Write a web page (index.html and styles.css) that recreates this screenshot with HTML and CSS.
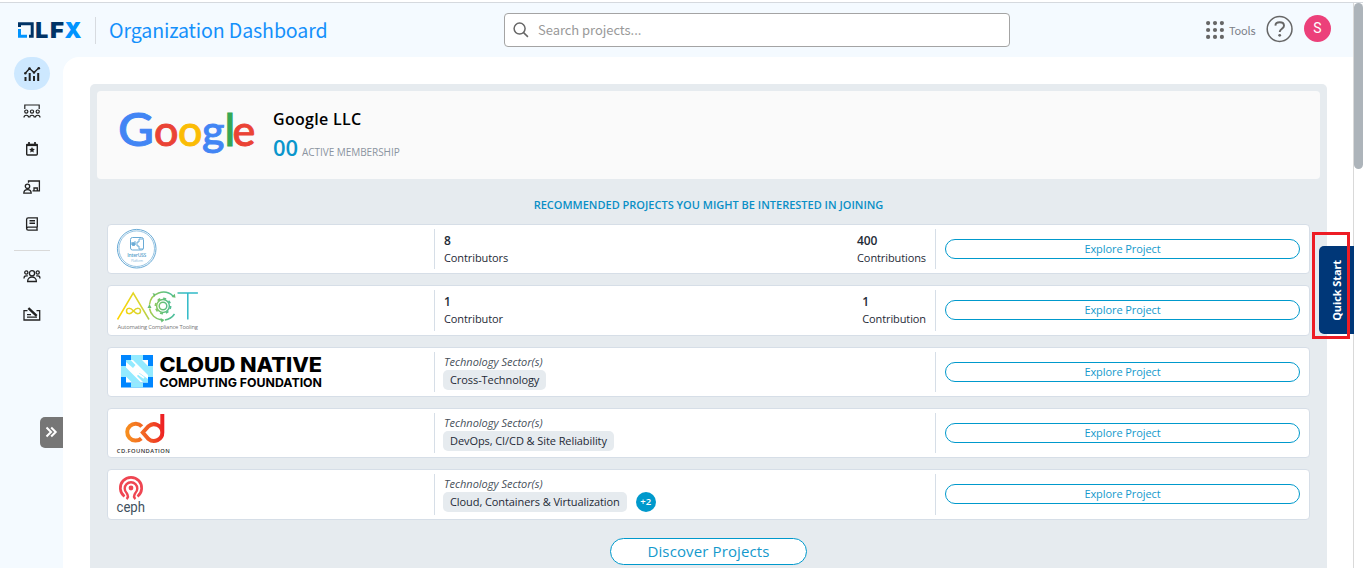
FILE: index.html
```html
<!DOCTYPE html>
<html lang="en">
<head>
<meta charset="utf-8">
<title>Organization Dashboard</title>
<link rel="stylesheet" href="styles.css">
</head>
<body>
<div class="app">
  <div class="window">
    <header class="header">
      <svg class="lfx" width="66" height="20" viewBox="0 0 66 20">
        <path d="M2.500 7V3.700H15.200V16.200H12" fill="none" stroke="#003366" stroke-width="3"/>
        <path d="M2.500 9V16.200H10" fill="none" stroke="#0094ff" stroke-width="3"/>
        <text class="lfx-text" y="17.800" font-size="22"><tspan x="18.200" textLength="13" lengthAdjust="spacingAndGlyphs" fill="#003366">L</tspan><tspan x="33" textLength="14" lengthAdjust="spacingAndGlyphs" fill="#003366">F</tspan><tspan x="47.500" textLength="17" lengthAdjust="spacingAndGlyphs" fill="#0094ff">X</tspan></text>
      </svg>
      <h1 class="title">Organization Dashboard</h1>
      <div class="search">
        <svg width="16" height="16" viewBox="0 0 16 16" fill="none" stroke="#666" stroke-width="1.5"><circle cx="6.6" cy="6.6" r="5.5"/><path d="M10.6 10.6l4.300 4.300"/></svg>
        <span>Search projects...</span>
      </div>
      <div class="tools">
        <svg width="18" height="18" viewBox="0 0 18 18" fill="#666"><circle cx="2.1" cy="2.1" r="2.1"/><circle cx="9" cy="2.1" r="2.1"/><circle cx="15.9" cy="2.1" r="2.1"/><circle cx="2.1" cy="9" r="2.1"/><circle cx="9" cy="9" r="2.1"/><circle cx="15.9" cy="9" r="2.1"/><circle cx="2.1" cy="15.9" r="2.1"/><circle cx="9" cy="15.9" r="2.1"/><circle cx="15.9" cy="15.9" r="2.1"/></svg>
        <span>Tools</span>
      </div>
      <svg class="help" width="28" height="28" viewBox="0 0 28 28" fill="none" stroke="#666"><circle cx="13.6" cy="14" r="12.4" stroke-width="1.5"/><path d="M9.4 10.6C9.5 8.4 11.2 7.3 13.7 7.3c2.6 0 4.3 1.3 4.3 3.4 0 3-4.300 3-4.300 6.400" stroke-width="1.9"/><circle cx="13.7" cy="20.3" r="1.4" fill="#666" stroke="none"/></svg>
      <div class="avatar">S</div>
    </header>
    <div class="body">
      <nav class="sidebar">
        <div class="nav-item active"><svg width="18" height="16" viewBox="0 0 18 16" fill="none" stroke="#222"><path d="M2.500 7L6.500 2.500l4.500 4 5-4.700" stroke-width="1.400"/><path d="M2.500 11v4M6.700 7V15M11 10v5M15.200 7v8" stroke-width="2"/><g fill="#222" stroke="none"><circle cx="2.300" cy="7.300" r="1.200"/><circle cx="6.500" cy="2.600" r="1.300"/><circle cx="11" cy="6.500" r="1.200"/><circle cx="15.800" cy="2.200" r="1.300"/></g></svg></div>
        <div class="nav-item"><svg width="18" height="14" viewBox="0 0 18 14" fill="none" stroke="#222" stroke-width="1.200"><path d="M1.800 5V1H16.200V5"/><circle cx="3.300" cy="7.600" r="1.600"/><circle cx="9" cy="7.600" r="1.600"/><circle cx="14.700" cy="7.600" r="1.600"/><path d="M1 13.500c0-3 4.600-3 4.600 0M6.700 13.500c0-3 4.600-3 4.600 0M12.400 13.500c0-3 4.600-3 4.600 0"/></svg></div>
        <div class="nav-item"><svg width="14" height="14" viewBox="0 0 14 14" fill="none" stroke="#222"><rect x="1.700" y="2.500" width="10.600" height="10.500" rx="1" stroke-width="1.400"/><path d="M1.200 3h11.600" stroke-width="2.200"/><path d="M4 0v3M10 0v3" stroke-width="1.700"/><path d="M7 4.900l.9 1.900 2 .2-1.500 1.400.4 2L7 9.400l-1.800 1 .4-2-1.500-1.400 2-.2z" fill="#222" stroke="none"/></svg></div>
        <div class="nav-item"><svg width="18" height="14" viewBox="0 0 18 14" fill="none" stroke="#222" stroke-width="1.300"><path d="M5.500 2.800V1H16.400V10.800H9.500M11 10.500V8h3.300v2.500"/><circle cx="4.500" cy="6.300" r="2.200"/><path d="M.8 13.200c0-4.800 7.400-4.800 7.400 0z"/></svg></div>
        <div class="nav-item"><svg width="14" height="14" viewBox="0 0 14 14" fill="none" stroke="#222" stroke-width="1.300"><path d="M12.300 10.200V.8H3.200C2.200.8 1.600 1.500 1.600 2.500v9c0 1 .6 1.700 1.600 1.700h9.600M12.200 10.200H3.200c-2 0-2 3 0 3M12 10v3"/><path d="M4.500 3.700h5.500M4.500 6.200h5.500" stroke-width="1.400"/></svg></div>
        <div class="rule"></div>
        <div class="nav-item"><svg width="18" height="14" viewBox="0 0 18 14" fill="none" stroke="#222" stroke-width="1.300"><circle cx="9" cy="4.300" r="2.600"/><path d="M4.600 12.500c-.2-6 9-6 8.800 0z"/><circle cx="3.300" cy="3.500" r="1.600"/><circle cx="14.700" cy="3.500" r="1.600"/><path d="M1 9.500c0-2.500 1.300-3 3.800-2.600M17 9.500c0-2.500-1.300-3-3.800-2.600"/></svg></div>
        <div class="nav-item"><svg width="18" height="14" viewBox="0 0 18 14" fill="none" stroke="#222" stroke-width="1.300"><path d="M4.500 3.700H1v9.300h15.700V3.700h-3.200M4 10.200h10M4 7.600h4"/><path d="M5.400 1.200l8.300 7.600" stroke-width="2.400"/></svg></div>
        <div class="toggle"><svg width="12" height="12" viewBox="0 0 12 12" fill="none" stroke="#fff" stroke-width="2"><path d="M1.500 1.500L6 6l-4.500 4.500M6.200 1.500L10.700 6l-4.500 4.500"/></svg></div>
      </nav>
      <main class="main">
        <section class="panel">
          <div class="company">
            <svg width="140" height="56" viewBox="0 0 140 56" class="google"><text y="38" font-size="43" stroke-width=".9"><tspan x="-1" font-size="46" textLength="36" lengthAdjust="spacingAndGlyphs" fill="#4285f4" stroke="#4285f4">G</tspan><tspan x="35" fill="#ea4335" stroke="#ea4335">o</tspan><tspan x="59" fill="#fbbc05" stroke="#fbbc05">o</tspan><tspan x="83" fill="#4285f4" stroke="#4285f4">g</tspan><tspan x="105.500" font-size="45" fill="#34a853" stroke="#34a853">l</tspan><tspan x="113.500" fill="#ea4335" stroke="#ea4335">e</tspan></text></svg>
            <div class="company-info">
              <h2>Google LLC</h2>
              <p><b>00</b> <span>ACTIVE MEMBERSHIP</span></p>
            </div>
          </div>
          <h3 class="recommend">RECOMMENDED PROJECTS YOU MIGHT BE INTERESTED IN JOINING</h3>
          <div class="rows">
            <article class="row">
              <div class="logo"><svg width="60" height="48" viewBox="0 0 60 48" fill="none" stroke="#6aabd6"><circle cx="28.700" cy="23.700" r="19.300" stroke-width="1"/><circle cx="28.700" cy="23.700" r="17.800" stroke-width=".7"/><rect x="22.500" y="12.500" width="13" height="12.500" rx="2" stroke-width="1"/><path d="M35 14h-4v3h-2v4h2v3h4M24 17v3h3v-4" stroke-width="1"/><circle cx="25.500" cy="19" r="1.500" fill="#6aabd6"/><text x="19.300" y="32" font-size="5" font-weight="600" textLength="19" fill="#5b9fcb" stroke="none">InterUSS</text><text x="23" y="37" font-size="3.500" textLength="12" fill="#8dbddd" stroke="none">Platform</text></svg></div>
              <div class="info split"><div><b>8</b><span>Contributors</span></div><div><b>400</b><span>Contributions</span></div></div>
              <div class="action"><button>Explore Project</button></div>
            </article>
            <article class="row">
              <div class="logo"><svg width="100" height="48" viewBox="0 0 100 48" fill="none"><defs><linearGradient id="act" gradientUnits="userSpaceOnUse" x1="10" y1="0" x2="90" y2="0"><stop offset="0" stop-color="#ffd400"/><stop offset=".3" stop-color="#d4d536"/><stop offset=".55" stop-color="#65c174"/><stop offset=".85" stop-color="#2fb9c7"/></linearGradient></defs><g stroke="url(#act)" stroke-width="1.500"><path d="M9.500 33.500L25.200 7 41 33.500"/><path d="M25.500 25c-3.500-4-7-3-7 0s3.500 4 7 0 7-3 7 0-3.500 4-7 0z"/><path d="M41.500 18.500A14 14 0 0 1 65 10M41.500 22.500A14 14 0 0 0 53.500 34M57 34A14 14 0 0 0 66.500 28"/><circle cx="55" cy="20" r="3.800"/><circle cx="55" cy="20" r="6.400"/><circle cx="55" cy="20" r="7.600" stroke-width="1.700" stroke-dasharray="2.980 2.980"/><path d="M69.500 7h20.400"/></g><path d="M79.800 7v26.500" stroke="#2fb9c7" stroke-width="1.500"/><path d="M63.500 11l4 .8-.7-4zM52.500 32l4 2-3 2.500zM39.500 22l2-4 2 4zM47.500 8l-3-1 2 4z" fill="#65bd72"/><text x="9.500" y="42.800" font-size="5.800" textLength="80.500" fill="#777">Automating Compliance Tooling</text></svg></div>
              <div class="info split"><div><b>1</b><span>Contributor</span></div><div><b>1</b><span>Contribution</span></div></div>
              <div class="action"><button>Explore Project</button></div>
            </article>
            <article class="row">
              <div class="logo"><svg class="cncf" width="220" height="48" viewBox="0 0 220 48"><path d="M13 7h32v32.500H13z" fill="#0086ff"/><path d="M23 7h12v5H23zM23 34.500h12v5H23zM13 18h5v11H13zM40 18h5v11h-5z" fill="#93eaff"/><path d="M18 12h22v22.500H18z" fill="#fff"/><path d="M18 19.500L33 34.500H24L18 28.500zM25 12h9l6 6v9z" fill="#93eaff"/><path d="M18 12h4.500l5 5-2.500 3-7-6zM40 34.500h-4.500L29 28l2.500-3 8.500 6z" fill="#93eaff"/><path d="M22 20l14 10" stroke="#fff" stroke-width="1.800"/><g font-weight="800"><text x="51.500" y="24" font-size="20" textLength="162.500" lengthAdjust="spacingAndGlyphs">CLOUD NATIVE</text><text x="51.500" y="38.500" font-size="12.300" font-weight="700" textLength="162.500" lengthAdjust="spacingAndGlyphs">COMPUTING FOUNDATION</text></g></svg></div>
              <div class="info"><i>Technology Sector(s)</i><div class="tags"><span class="tag">Cross-Technology</span></div></div>
              <div class="action"><button>Explore Project</button></div>
            </article>
            <article class="row">
              <div class="logo"><svg width="80" height="48" viewBox="0 0 80 48"><defs><linearGradient id="cd" gradientUnits="userSpaceOnUse" x1="16" y1="24" x2="57" y2="20"><stop offset="0" stop-color="#f7941e"/><stop offset=".6" stop-color="#f15a24"/><stop offset="1" stop-color="#ed1c24"/></linearGradient></defs><g fill="none" stroke="url(#cd)" stroke-width="4"><path d="M33.800 17.500A8.400 8.400 0 1 0 33.300 29.400"/><path d="M54.300 5V23.500A8.400 8.400 0 0 1 40.500 30L34.800 23.500 40.500 17.200A8.400 8.400 0 0 1 54.300 23.500"/></g><text x="8.800" y="44.300" font-size="5.800" font-weight="600" textLength="53" fill="#333">CD.FOUNDATION</text></svg></div>
              <div class="info"><i>Technology Sector(s)</i><div class="tags"><span class="tag">DevOps, CI/CD &amp; Site Reliability</span></div></div>
              <div class="action"><button>Explore Project</button></div>
            </article>
            <article class="row">
              <div class="logo"><svg class="ceph" width="60" height="48" viewBox="0 0 60 48"><g fill="none" stroke="#ef4652"><path d="M16.500 26.500A10.700 10.700 0 1 1 29.500 26.500" stroke-width="2.700"/><path d="M18.500 29C21 27 20 25 18.600 23A6.300 6.300 0 1 1 27.400 23C26 25 25 27 27.500 29" stroke-width="2.400"/></g><circle cx="23" cy="18" r="2.400" fill="#ef4652"/><text x="8.500" y="42" font-size="15" textLength="28.500" lengthAdjust="spacingAndGlyphs" fill="#3f515e">ceph</text></svg></div>
              <div class="info"><i>Technology Sector(s)</i><div class="tags"><span class="tag">Cloud, Containers &amp; Virtualization</span><span class="more">+2</span></div></div>
              <div class="action"><button>Explore Project</button></div>
            </article>
          </div>
          <button class="discover">Discover Projects</button>
        </section>
      </main>
    </div>
  </div>
  <div class="scrollbar"><div class="thumb"></div></div>
  <div class="quick-start"><span>Quick Start</span></div>
  <div class="highlight"></div>
</div>
</body>
</html>
```
FILE: styles.css
```css
* { box-sizing: border-box; }
body { margin: 0; background: #fff; font-family: "Open Sans", sans-serif; overflow: hidden; }
h1, h2, h3, p { margin: 0; }
svg { display: block; flex: none; overflow: visible; }
.app { position: relative; width: 1363px; height: 568px; display: flex; padding-top: 2px; overflow: hidden; }
.app::before { content: ""; position: absolute; top: 2px; left: 0; right: 0; height: 1px; background: #d5d9de; }
.window { width: 1354px; height: 566px; border-right: 1px solid #d9d9d9; background: #f4faff; padding-top: 1px; }
.header { height: 54px; display: flex; align-items: center; padding-left: 17px; font-family: "Noto Sans CJK SC", "Open Sans", sans-serif; }
.lfx-text { font-family: Inter, sans-serif; font-weight: 900; }
.title { width: 409px; height: 27px; border-left: 1px solid #d7dbe0; margin-left: 12px; padding-left: 13px; font-size: 19.600px; letter-spacing: -.13px; font-weight: 400; line-height: 26px; color: #1490fb; white-space: nowrap; }
.search { width: 506px; height: 34px; display: flex; align-items: center; gap: 9px; padding-left: 8px; background: #fff; border: 1px solid #a4a4a4; border-radius: 4px; color: #999; font-size: 13px; letter-spacing: -.05px; }
.search span { padding-bottom: 2px; }
.tools { display: flex; align-items: center; gap: 5px; margin-left: 196px; color: #7b8088; font-size: 11px; letter-spacing: -.2px; }
.tools span { width: 26px; }
.help { margin-left: 11px; margin-top: -2px; }
.avatar { width: 27px; height: 27px; margin-left: 10px; margin-top: -3px; border-radius: 50%; background: #ec407a; color: #fff; font: 14px/27px Roboto, sans-serif; text-align: center; }
.body { display: flex; height: 511px; }
.sidebar { width: 63px; display: flex; flex-direction: column; align-items: center; }
.nav-item { width: 36px; height: 33px; display: flex; align-items: center; justify-content: center; margin-bottom: 4.700px; }
.active { background: #cde8ff; border-radius: 17px; }
.rule { width: 36px; height: 1px; background: #d9d9d9; margin: 5px 0 8px; }
.toggle { align-self: flex-end; display: flex; align-items: center; justify-content: center; width: 23px; height: 31px; margin-top: 82px; padding-right: 1px; background: #767676; border-radius: 5px 0 0 5px; }
.main { flex: 1; background: #fff; border-top-left-radius: 16px; padding: 27px 26px 0 27px; }
.panel { height: 520px; padding: 7px; background: #e6ebef; border-radius: 5px 5px 0 0; display: flex; flex-direction: column; }
.company { height: 88px; flex: none; display: flex; background: #fafafa; border-radius: 4px; padding: 14px 0 0 22px; }
.google { font-family: Lato, sans-serif; font-weight: 500; margin-top: 3px; }
.cncf { font-family: Inter, sans-serif; }
.ceph { font-family: Roboto, sans-serif; }
.company-info { padding-left: 14px; }
.company-info h2 { font-size: 16px; letter-spacing: .3px; line-height: 28px; font-weight: 650; color: #000; }
.company-info p { display: flex; align-items: baseline; gap: 4px; font-size: 10px; line-height: 28px; letter-spacing: -.05px; color: #8a94a0; }
.company-info b { font-size: 22px; font-weight: 650; color: #0a96cc; }
.recommend { margin-top: 17px; font-size: 11px; line-height: 18px; font-weight: 620; color: #0a8fc6; text-align: center; }
.rows { display: flex; flex-direction: column; gap: 10.900px; margin: 10px 10px 0; }
.row { height: 50.400px; display: flex; background: #fff; border: 1px solid #d6dee7; border-radius: 4px; font-size: 11px; color: #1e2a36; }
.logo { width: 326px; }
.info { width: 501px; border-left: 1px solid #d6dee7; margin: 4px 0; padding-left: 9px; }
.info i { display: block; height: 18px; line-height: 19px; color: #46505a; }
.split { display: flex; justify-content: space-between; padding-right: 9px; }
.split b, .split span { display: block; line-height: 17px; }
.split b { margin-top: 3px; font-size: 12px; font-weight: 650; letter-spacing: -.1px; }
.split span { letter-spacing: -.1px; }
.tags { display: flex; align-items: center; gap: 9px; margin-left: -1px; }
.tag { height: 20px; line-height: 19px; padding: 0 7px; background: #e6ebef; border-radius: 5px; letter-spacing: -.08px; }
.more { width: 20px; height: 20px; border-radius: 50%; background: #0099cc; color: #fff; font-size: 9.500px; font-weight: 600; line-height: 19px; text-align: center; }
.action { flex: 1; border-left: 1px solid #d6dee7; margin: 4px 0; padding: 10px 9px; }
button { font-family: inherit; color: #1499cc; background: #fff; border: 1px solid #0099cc; padding: 0; }
.action button { display: block; width: 355px; height: 20px; border-radius: 10px; font-size: 11px; line-height: 16px; letter-spacing: -.08px; }
.discover { flex: none; align-self: center; width: 197px; height: 27px; margin-top: 18px; border-radius: 14px; font-size: 15px; line-height: 24px; letter-spacing: .12px; }
.scrollbar { width: 9px; padding-top: 1px; background: #fff; }
.thumb { height: 166px; border-radius: 5px; background: #adb4ba; }
.quick-start { position: absolute; left: 1319px; top: 246px; width: 35px; height: 88px; display: flex; align-items: center; justify-content: center; background: #003778; border-radius: 5px 0 0 5px; color: #fff; }
.quick-start span { writing-mode: vertical-rl; transform: rotate(180deg); font-size: 11px; font-weight: 700; letter-spacing: -.1px; white-space: nowrap; }
.highlight { position: absolute; left: 1312px; top: 232px; width: 38px; height: 107px; border: 3px solid #ed1c24; }
```
